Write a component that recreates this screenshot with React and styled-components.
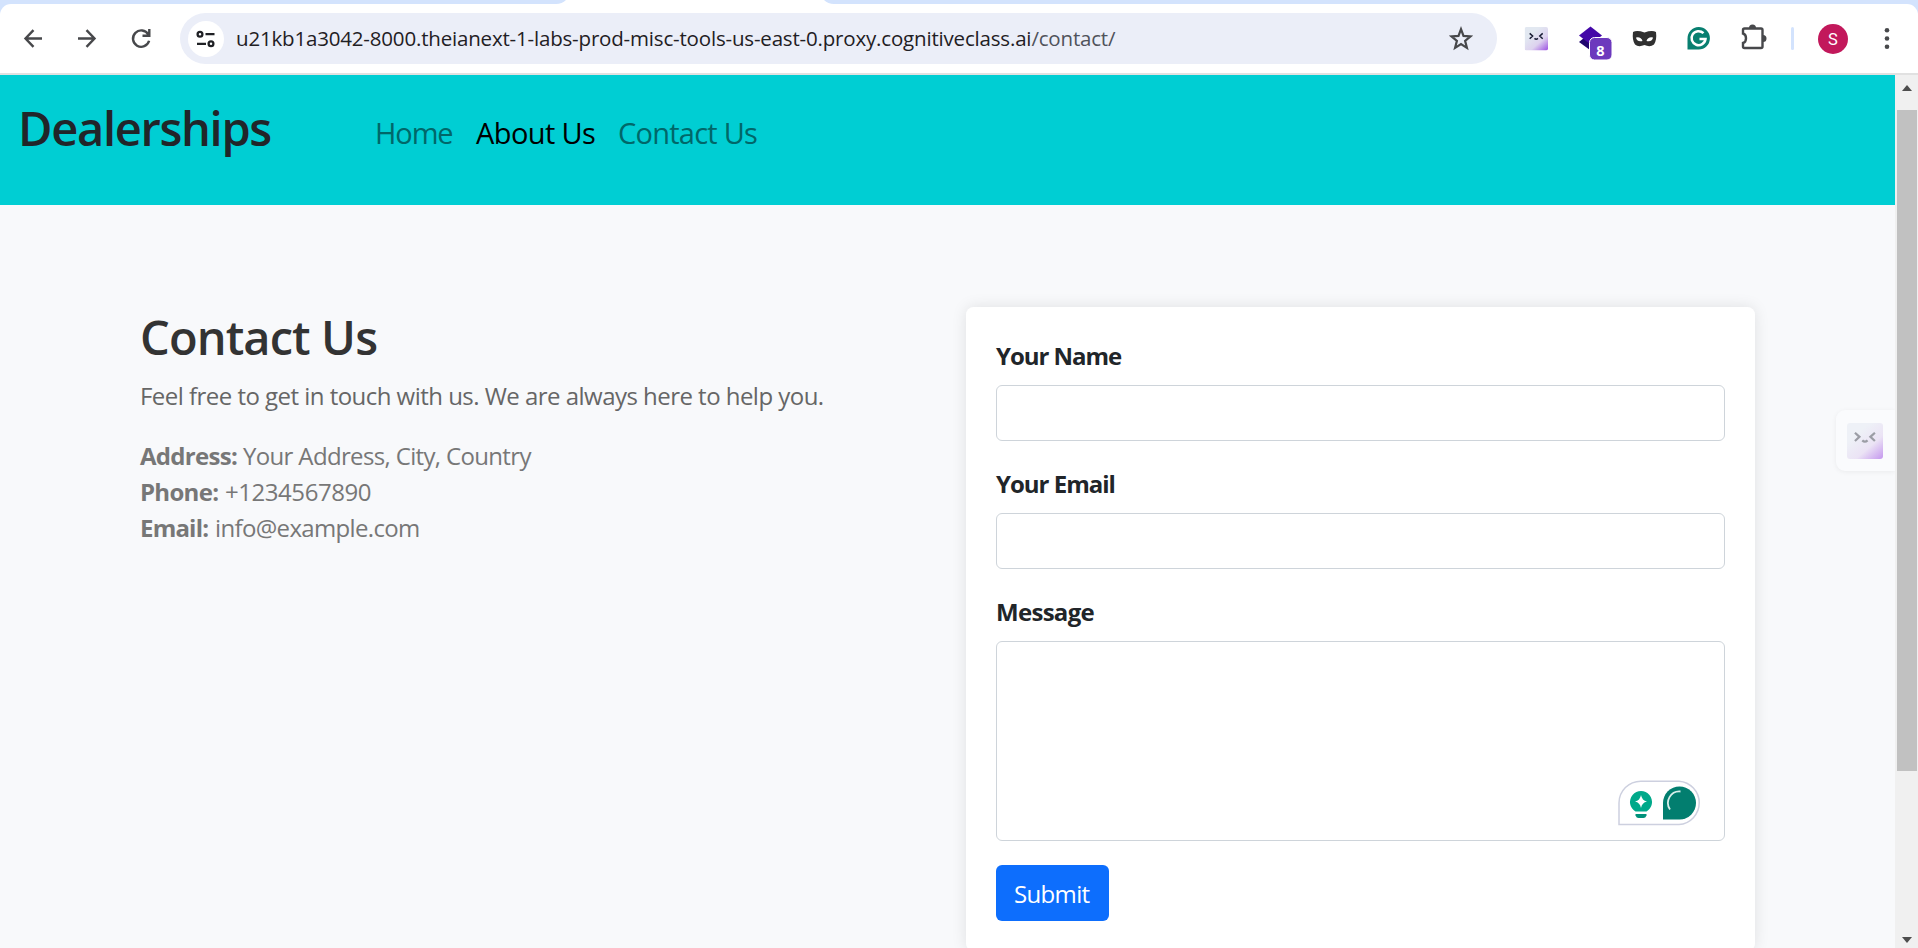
import React from 'react';
import styled, { createGlobalStyle } from 'styled-components';

const Global = createGlobalStyle`
  * { box-sizing: border-box; }
  html, body { margin: 0; padding: 0; background: #f8f9fb; overflow: hidden; }
  body { font-family: "Open Sans", "Noto Sans", sans-serif; color: #212529; }
  h1, h2, p { margin: 0; }
`;

const Window = styled.div`
  width: 1918px;
  height: 948px;
  display: flex;
  flex-direction: column;
  overflow: hidden;
`;

const TabStrip = styled.div`
  flex: none;
  height: 4px;
  display: flex;
  background: #d3e3fd;
`;

const Tabs = styled.svg`
  display: block;
`;

const ToolbarBacking = styled.div`
  flex: none;
  background: #d3e3fd;
`;

const Toolbar = styled.div`
  height: 71px;
  display: flex;
  align-items: flex-start;
  background: #fff;
  border-radius: 11px 11px 0 0;
  border-bottom: 2px solid #e1e1e1;
`;

const NavButtons = styled.div`
  display: flex;
  gap: 30px;
  padding: 22px 0 0 21px;
  width: 180px;
  svg { display: block; }
`;

const Omnibox = styled.div`
  width: 1317px;
  height: 51px;
  margin-top: 9px;
  padding: 0 24px 0 8px;
  display: flex;
  align-items: center;
  background: #ebeef8;
  border-radius: 26px;
`;

const SiteInfo = styled.div`
  width: 36px;
  height: 36px;
  display: flex;
  align-items: center;
  justify-content: center;
  border-radius: 50%;
  background: #fff;
`;

const Text = styled.span`
  display: inline-block;
  white-space: pre;
  letter-spacing: ${(p) => p.$ls || 0}px;
`;

const Url = styled.div`
  flex: 1;
  padding: 0 0 2px 12px;
  font-size: 20.5px;
  line-height: 28px;
  color: #1f2024;
  white-space: nowrap;
`;

const UrlPath = styled.span`
  color: #50535b;
`;

const Extensions = styled.div`
  display: flex;
  padding-left: 25px;
  svg { display: block; }
`;

const Page = styled.div`
  flex: 1;
  min-height: 0;
  display: flex;
`;

const Content = styled.main`
  position: relative;
  width: 1895px;
  overflow: hidden;
  background: #f8f9fb;
`;

const Navbar = styled.nav`
  height: 130px;
  display: flex;
  padding-left: 18px;
  background: #00ced3;
`;

const Brand = styled.h1`
  width: 357px;
  padding-top: 21px;
  font-size: 47px;
  font-weight: 600;
  line-height: 64px;
  color: #212529;
`;

const NavLinks = styled.div`
  display: flex;
  padding-top: 36px;
  font-size: 29px;
  line-height: 44px;
`;

const NavLink = styled.a`
  width: ${(p) => p.$w}px;
  color: ${(p) => (p.$active ? '#000' : '#006769')};
`;

const Columns = styled.div`
  display: flex;
  padding: 102px 0 0 140px;
`;

const Info = styled.section`
  width: 826px;
  padding-top: 1px;
`;

const Title = styled.h2`
  font-size: 47px;
  font-weight: 600;
  line-height: 58px;
  color: #333;
`;

const Lead = styled.p`
  margin: 12px 0 24px;
  font-size: 24px;
  line-height: 36px;
  color: #666;
`;

const Detail = styled.p`
  font-size: 24px;
  line-height: 36px;
  color: #777;
  white-space: nowrap;
`;

const Strong = styled.strong`
  display: inline-block;
  width: ${(p) => p.$w}px;
  font-weight: 700;
`;

const Card = styled.form`
  width: 789px;
  height: 644px;
  padding: 30px;
  display: flex;
  flex-direction: column;
  align-items: flex-start;
  background: #fff;
  border-radius: 7.5px;
  box-shadow: 0 0 15px rgba(0, 0, 0, 0.1);
`;

const Label = styled.label`
  flex: none;
  height: 48px;
  padding-top: 1px;
  font-size: 24px;
  font-weight: 700;
  line-height: 36px;
`;

const Field = styled.div`
  position: relative;
  flex: none;
  width: 729px;
  height: ${(p) => p.$h}px;
  margin-bottom: 24px;
  background: #fff;
  border: 1px solid #ced4da;
  border-radius: 6px;
`;

const Submit = styled.button`
  flex: none;
  width: 113px;
  height: 56px;
  padding: 1px 0 0 18px;
  text-align: left;
  border: 0;
  border-radius: 6px;
  background: #0d6efd;
  color: #fff;
  font-family: inherit;
  font-size: 24px;
  line-height: 36px;
`;

const Assistant = styled.svg`
  position: absolute;
  right: 22px;
  bottom: 14px;
`;

const SideWidget = styled.div`
  position: absolute;
  right: 0;
  top: 335px;
  width: 59px;
  height: 61px;
  padding: 13px 11px;
  border-radius: 9px 0 0 9px;
  background: #fafbfd;
  box-shadow: 0 1px 5px rgba(0, 0, 0, 0.06);
  svg { display: block; }
`;

const Scrollbar = styled.div`
  width: 23px;
  display: flex;
  flex-direction: column;
  justify-content: space-between;
  background: #f0f0f0;
  padding: 0 1px 0 2px;
  svg { display: block; }
`;

const Thumb = styled.div`
  height: 661px;
  margin-bottom: auto;
  background: #c1c1c1;
`;

const Face = ({ size, muted, id }) => (
  <svg width={size} height={size} viewBox="0 0 24 24">
    <defs>
      <linearGradient id={id} x1="0.35" y1="0.25" x2="1" y2="1">
        <stop offset="0" stopColor={muted ? '#eef1f7' : '#e2e8f1'} />
        <stop offset="0.5" stopColor={muted ? '#ebe3f5' : '#ddd2ef'} />
        <stop offset="1" stopColor={muted ? '#c496ee' : '#9b4fe2'} />
      </linearGradient>
    </defs>
    <rect width="24" height="24" rx="2" fill={`url(#${id})`} />
    <g fill="none" stroke={muted ? '#9b9da5' : '#171b33'} strokeWidth="1.5">
      <path d="M5.3 6.500 8.300 9.200 5.300 12M18.600 6.500 15.600 9.200 18.600 12" />
      <path d="M10.200 11.600q1.700 1.700 3.500 0" />
    </g>
  </svg>
);

export default function App() {
  return (
    <Window>
      <Global />
      <TabStrip>
        <Tabs width="1918" height="4" viewBox="0 0 1918 4">
          <path d="M556 4Q562 4 566 0H824Q828 4 834 4Z" fill="#fff" />
        </Tabs>
      </TabStrip>
      <ToolbarBacking>
        <Toolbar>
          <NavButtons>
            <svg width="24" height="24" viewBox="0 0 24 24" fill="none" stroke="#47484b" strokeWidth="2.4">
              <path d="M21 12.500H4.500M12.500 4.200 4.500 12.500l8.000 8.300" />
            </svg>
            <svg width="24" height="24" viewBox="0 0 24 24" fill="none" stroke="#47484b" strokeWidth="2.4">
              <path d="M3 12.500h16.500M11.500 4.200 19.500 12.500l-8.000 8.300" />
            </svg>
            <svg width="24" height="24" viewBox="0 0 24 24" fill="none" stroke="#47484b" strokeWidth="2.4">
              <path d="M19.300 8.500A8.200 8.200 0 1 0 20.100 14.800M20.300 3V9.700H13.500" />
            </svg>
          </NavButtons>
          <Omnibox>
            <SiteInfo>
              <svg width="20" height="18" viewBox="0 0 20 18" fill="none" stroke="#1f2024" strokeWidth="2.3">
                <circle cx="4" cy="4.2" r="2.4" />
                <path d="M9.5 4.2H18.500M1 13.8h9" />
                <circle cx="15" cy="13.8" r="2.4" />
              </svg>
            </SiteInfo>
            <Url>
              <Text $ls={-0.18}>u21kb1a3042-8000.theianext-1-labs-prod-misc-tools-us-east-0.proxy.cognitiveclass.ai<UrlPath>/contact/</UrlPath></Text>
            </Url>
            <svg width="24" height="26" viewBox="0 0 24 26" fill="none" stroke="#47484b" strokeWidth="2.2">
              <path d="m12 3.200 2.500 6.700 7 .5-5.400 4.500 1.800 6.900-5.900-3.800-5.900 3.800 1.800-6.900-5.400-4.500 7-.5Z" />
            </svg>
          </Omnibox>
          <Extensions>
            <svg width="396" height="69" viewBox="1522 4 396 69">
              <svg x="1524.500" y="27" width="24" height="24"><Face size={23.5} id="face-small" /></svg>
              <path d="m1579 42 11-9 11 9-11 8Z" fill="#20066e" />
              <path d="m1579 35.500 11.500-9 11.500 9-11.500 9Z" fill="#4408a8" />
              <rect x="1589.500" y="37.500" width="22.500" height="22.500" rx="5" fill="#6c39bd" stroke="#fff" />
              <text x="1600.500" y="55.500" fontFamily="Open Sans" fontSize="14.500" fontWeight="700" textAnchor="middle" fill="#fff">8</text>
              <path d="M1633 32q4-2 11.500.5 7.500-2.500 11.500-.5 1 8-2 12.500-4 3-9.500.500-6 2.500-9.500-.5-3-4.500-2-12.500Z" fill="#303030" />
              <path d="M1636 37.500q5-1 6.500 3.500-6 1-6.500-3.500M1653 37.500q-5-1-6.500 3.500 6 1 6.500-3.500" fill="#fff" />
              <path d="M1687.500 49.500V38.500a11.200 11.200 0 1 1 11.200 11Z" fill="#087f70" />
              <path d="M1703.500 33.200A7 7 0 1 0 1705.500 39H1699.500" fill="none" stroke="#fff" strokeWidth="2.500" />
              <path d="M1744.500 28.500H1761a1.500 1.500 0 0 1 1.500 1.500V46.500a1.500 1.500 0 0 1-1.500 1.500H1744.500a1.500 1.500 0 0 1-1.500-1.500V43c4-1 4-8.500 0-9.500V30a1.500 1.500 0 0 1 1.500-1.500Z" fill="none" stroke="#47484b" strokeWidth="2.400" />
              <path d="M1749 28a3.500 3.500 0 0 1 7 0ZM1763 35a3.500 3.500 0 0 1 0 7Z" fill="#47484b" />
              <rect x="1791" y="27" width="3" height="23" rx="1.500" fill="#d3e3fd" />
              <circle cx="1833" cy="39" r="15" fill="#c2185b" />
              <text x="1833" y="45" fontFamily="Roboto" fontSize="16.500" textAnchor="middle" fill="#fff">S</text>
              <g fill="#47484b"><circle cx="1887" cy="30.200" r="2.300" /><circle cx="1887" cy="38.500" r="2.300" /><circle cx="1887" cy="46.800" r="2.300" /></g>
            </svg>
          </Extensions>
        </Toolbar>
      </ToolbarBacking>
      <Page>
        <Content>
          <Navbar>
            <Brand><Text $ls={-1.3}>Dealerships</Text></Brand>
            <NavLinks>
              <NavLink $w={101}><Text $ls={-1.1}>Home</Text></NavLink>
              <NavLink $w={142} $active><Text $ls={-0.6}>About Us</Text></NavLink>
              <NavLink $w={150}><Text $ls={-0.75}>Contact Us</Text></NavLink>
            </NavLinks>
          </Navbar>
          <Columns>
            <Info>
              <Title><Text $ls={-0.9}>Contact Us</Text></Title>
              <Lead><Text $ls={-0.53}>Feel free to get in touch with us. We are always here to help you.</Text></Lead>
              <Detail><Strong $w={103}><Text $ls={-0.7}>Address:</Text></Strong><Text $ls={-0.65}>Your Address, City, Country</Text></Detail>
              <Detail><Strong $w={85}><Text $ls={-0.7}>Phone:</Text></Strong><Text $ls={-0.45}>+1234567890</Text></Detail>
              <Detail><Strong $w={75}><Text $ls={-0.8}>Email:</Text></Strong><Text $ls={-0.65}>info@example.com</Text></Detail>
            </Info>
            <Card>
              <Label><Text $ls={-1.05}>Your Name</Text></Label>
              <Field $h={56} />
              <Label><Text $ls={-1}>Your Email</Text></Label>
              <Field $h={56} />
              <Label><Text $ls={-0.7}>Message</Text></Label>
              <Field $h={200}>
                <Assistant width="84" height="46" viewBox="0 0 84 46">
                  <path d="M1 44.500V23A21.800 21.800 0 0 1 22.800 1.200H61a21.700 21.700 0 0 1 0 43.300Z" fill="#fff" stroke="#cdd0df" strokeWidth="1.500" />
                  <path d="M17.500 31.500a11 11 0 1 1 11 0Z" fill="#00a98a" />
                  <path d="M23 15q1 5.500 6 6.500-5 1-6 6.500-1-5.500-6-6.500 5-1 6-6.500Z" fill="#fff" />
                  <path d="M17.500 34h11v1.500q-1 2.500-3 2.500h-5q-2 0-3-2.500Z" fill="#00917a" />
                  <path d="M45 39.500V23a16.500 16.500 0 1 1 16.500 16.500Z" fill="#027e6f" />
                  <path d="M62.500 11.500a11.500 11.500 0 0 0-10.500 18" fill="none" stroke="#d9efeb" strokeWidth="1.800" />
                </Assistant>
              </Field>
              <Submit type="button"><Text $ls={-0.65}>Submit</Text></Submit>
            </Card>
          </Columns>
          <SideWidget><Face size={36} muted id="face-side" /></SideWidget>
        </Content>
        <Scrollbar>
          <svg width="20" height="35" viewBox="0 0 20 35"><path d="M5 16h10l-5-6Z" fill="#4d4d4d" /></svg>
          <Thumb />
          <svg width="20" height="17" viewBox="0 0 20 17"><path d="M5 6h10l-5 6Z" fill="#4d4d4d" /></svg>
        </Scrollbar>
      </Page>
    </Window>
  );
}
